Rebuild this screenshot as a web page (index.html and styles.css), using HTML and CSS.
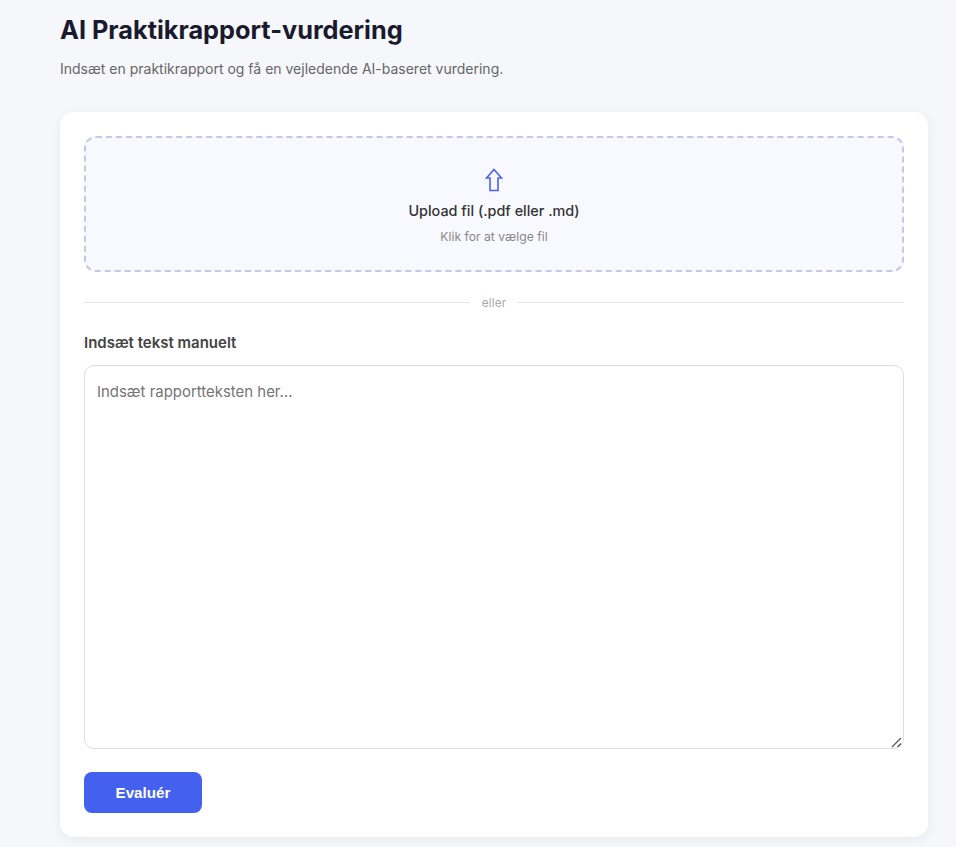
FILE: index.html
```html
<!DOCTYPE html>
<html lang="da">
<head>
<meta charset="utf-8">
<title>AI Praktikrapport-vurdering</title>
<link rel="stylesheet" href="styles.css">
</head>
<body>
<main class="page">
  <h1 class="title">AI Praktikrapport-vurdering</h1>
  <p class="subtitle">Indsæt en praktikrapport og få en vejledende AI-baseret vurdering.</p>
  <section class="card">
    <div class="drop">
      <svg class="drop-icon" width="18" height="24" viewBox="0 0 18 24" aria-hidden="true">
        <path d="M9 1.5 L16.5 10 L13 10 L13 22.5 L5 22.5 L5 10 L1.5 10 Z" fill="none" stroke="#4a62f0" stroke-width="1.6"/>
      </svg>
      <div class="drop-title">Upload fil (.pdf eller .md)</div>
      <div class="drop-hint">Klik for at vælge fil</div>
    </div>
    <div class="divider"><span>eller</span></div>
    <label class="label" for="report">Indsæt tekst manuelt</label>
    <textarea class="input" id="report" placeholder="Indsæt rapportteksten her..."></textarea>
    <button class="submit" type="button">Evaluér</button>
  </section>
</main>
</body>
</html>
```
FILE: styles.css
```css
* { box-sizing: border-box; }
html, body { margin: 0; height: 100%; overflow: hidden; }
body {
  background: #f5f7fb;
  font-family: Inter, "Noto Sans", sans-serif;
  color: #1a1a2e;
}
.page { padding: 14px 28px 0 60px; }
.title { margin: 0; font-size: 25.3px; line-height: 32px; font-weight: 700; color: #1a1a2e; }
.subtitle { margin: 14px 0 34px; font-size: 14px; line-height: 18px; color: #666; }
.card {
  background: #fff;
  border-radius: 14px;
  padding: 24px;
  box-shadow: 0 2px 12px rgba(0, 0, 0, 0.06);
  display: flex;
  flex-direction: column;
  align-items: stretch;
}
.drop {
  height: 136px;
  border: 2px dashed #c5c8e8;
  border-radius: 12px;
  background: #f8f9ff;
  display: flex;
  flex-direction: column;
  align-items: center;
  padding-top: 30px;
}
.drop-icon { display: block; }
.drop-title { margin-top: 10px; font-size: 14.4px; line-height: 18px; font-weight: 500; color: #333; }
.drop-hint { margin-top: 9px; font-size: 12.2px; line-height: 16px; color: #888; }
.divider {
  display: flex;
  align-items: center;
  gap: 12px;
  margin-top: 22px;
  height: 16px;
  font-size: 12px;
  color: #aaa;
}
.divider::before, .divider::after { content: ""; flex: 1; height: 1px; background: #e5e5e5; }
.label { margin-top: 23px; font-size: 15px; line-height: 20px; font-weight: 600; color: #444; }
.input {
  margin-top: 12px;
  height: 384px;
  padding: 15px 12px;
  border: 1px solid #ddd;
  border-radius: 10px;
  font-family: inherit;
  font-size: 14.95px;
  line-height: 22px;
  color: #333;
  background: #fff;
  outline: none;
  resize: vertical;
}
.input::placeholder { color: #757575; }
.input::-webkit-resizer {
  background: url("data:image/svg+xml,%3Csvg xmlns='http://www.w3.org/2000/svg' width='15' height='15'%3E%3Cpath d='M4 14L13 5M9.5 14L13 10.5' stroke='%23555' stroke-width='1.3' fill='none'/%3E%3C/svg%3E") no-repeat;
}
.submit {
  margin-top: 23px;
  align-self: flex-start;
  width: 118px;
  height: 41px;
  border: 0;
  border-radius: 8px;
  background: #4361ee;
  color: #fff;
  font-family: "Liberation Sans", Arial, sans-serif;
  font-size: 15.2px;
  font-weight: 700;
}
```
